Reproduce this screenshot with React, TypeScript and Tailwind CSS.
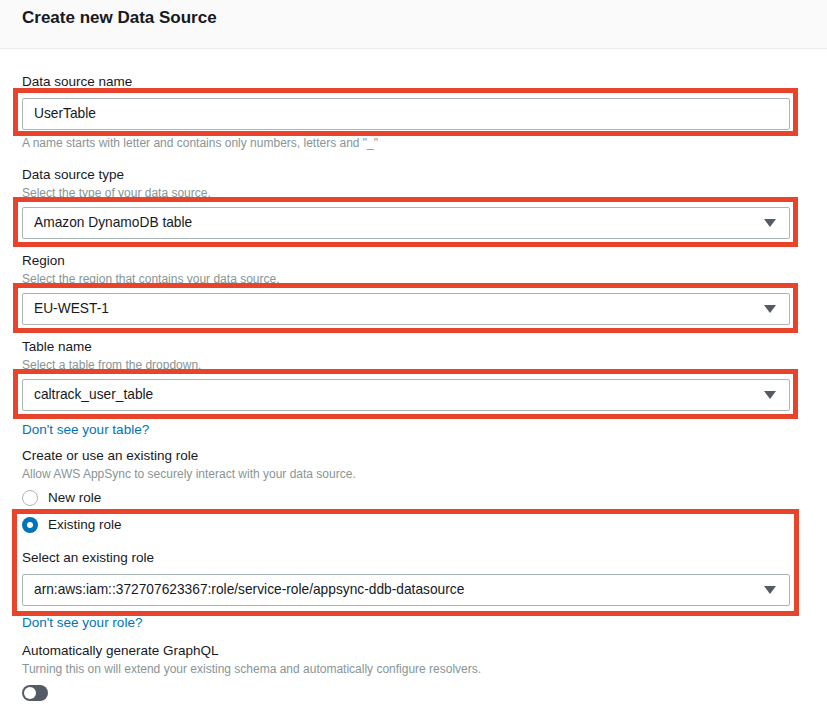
import React from 'react';

const FONT = { fontFamily: '"Liberation Sans", Arial, sans-serif' };

function RedBox({ className }: { className: string }) {
  return <span className={`pointer-events-none absolute z-10 border-[5px] border-[#e8432b] ${className}`} />;
}

function Caret() {
  return (
    <svg width="12" height="8" viewBox="0 0 12 8" className="shrink-0">
      <path d="M0 0 H12 L6 8 Z" fill="#545b64" />
    </svg>
  );
}

function Field({ value, select = false }: { value: string; select?: boolean }) {
  return (
    <div className="flex h-[32px] w-[768px] items-center justify-between rounded-[2px] border border-[#aab7b8] bg-white pl-[11px] pr-[13px] text-[13.75px] text-[#16191f]">
      <span>{value}</span>
      {select && <Caret />}
    </div>
  );
}

function Boxed({ children, bottom = '-bottom-[8px]' }: { children: React.ReactNode; bottom?: string }) {
  return (
    <div className="relative w-[768px]">
      <RedBox className={`-left-[9px] -right-[8px] -top-[10px] ${bottom}`} />
      {children}
    </div>
  );
}

function Label({ children, className = '' }: { children: React.ReactNode; className?: string }) {
  return <div className={`text-[13.5px] leading-[20px] text-[#16191f] ${className}`}>{children}</div>;
}

function Hint({ children, className = '' }: { children: React.ReactNode; className?: string }) {
  return <div className={`text-[12px] leading-[17px] text-[#879596] ${className}`}>{children}</div>;
}

function Radio({ checked, label, className = '' }: { checked: boolean; label: string; className?: string }) {
  return (
    <div className={`flex h-[20px] items-center gap-[10px] ${className}`}>
      {checked ? (
        <span className="flex h-[16px] w-[16px] items-center justify-center rounded-full bg-[#0073bb]">
          <span className="h-[6px] w-[6px] rounded-full bg-white" />
        </span>
      ) : (
        <span className="h-[16px] w-[16px] rounded-full border border-[#aab7b8] bg-white" />
      )}
      <span className="text-[13.5px] leading-[20px] text-[#16191f]">{label}</span>
    </div>
  );
}

export default function App() {
  return (
    <div style={FONT} className="min-h-[724px] w-[827px] overflow-hidden bg-white">
      <div className="h-[49px] border-b border-[#eaeded] bg-[#fafafa] pl-[22px] pt-[8px]">
        <h1 className="text-[17px] font-bold leading-[20px] text-[#16191f]">Create new Data Source</h1>
      </div>

      <div className="flex flex-col pl-[22px]">
        <Label className="mt-[23px]">Data source name</Label>
        <div className="mt-[6px]">
          <Boxed bottom="-bottom-[6px]">
            <Field value="UserTable" />
          </Boxed>
        </div>
        <Hint className="mt-[5px]">A name starts with letter and contains only numbers, letters and "_"</Hint>

        <Label className="mt-[13px]">Data source type</Label>
        <Hint>Select the type of your data source.</Hint>
        <div className="mt-[5px]">
          <Boxed>
            <Field value="Amazon DynamoDB table" select />
          </Boxed>
        </div>

        <Label className="mt-[12px]">Region</Label>
        <Hint>Select the region that contains your data source.</Hint>
        <div className="mt-[5px]">
          <Boxed>
            <Field value="EU-WEST-1" select />
          </Boxed>
        </div>

        <Label className="mt-[12px]">Table name</Label>
        <Hint>Select a table from the dropdown.</Hint>
        <div className="mt-[5px]">
          <Boxed>
            <Field value="caltrack_user_table" select />
          </Boxed>
        </div>

        <div className="mt-[9px] text-[13.5px] leading-[19px] text-[#0073bb]">Don't see your table?</div>

        <Label className="mt-[7px]">Create or use an existing role</Label>
        <Hint>Allow AWS AppSync to securely interact with your data source.</Hint>
        <Radio checked={false} label="New role" className="mt-[5px]" />

        <div className="relative mt-[7px] w-[768px]">
          <RedBox className="-left-[10px] -right-[9px] -top-[6px] -bottom-[10px]" />
          <Radio checked label="Existing role" />
          <Label className="mt-[13px]">Select an existing role</Label>
          <div className="mt-[6px]">
            <Field value="arn:aws:iam::372707623367:role/service-role/appsync-ddb-datasource" select />
          </div>
        </div>

        <div className="mt-[7px] text-[13.5px] leading-[19px] text-[#0073bb]">Don't see your role?</div>

        <Label className="mt-[9px]">Automatically generate GraphQL</Label>
        <Hint>Turning this on will extend your existing schema and automatically configure resolvers.</Hint>
        <div className="mt-[7px] flex h-[16px] w-[26px] items-center rounded-full bg-[#545b64] pl-[2px]">
          <span className="h-[12px] w-[12px] rounded-full bg-white" />
        </div>
      </div>
    </div>
  );
}
